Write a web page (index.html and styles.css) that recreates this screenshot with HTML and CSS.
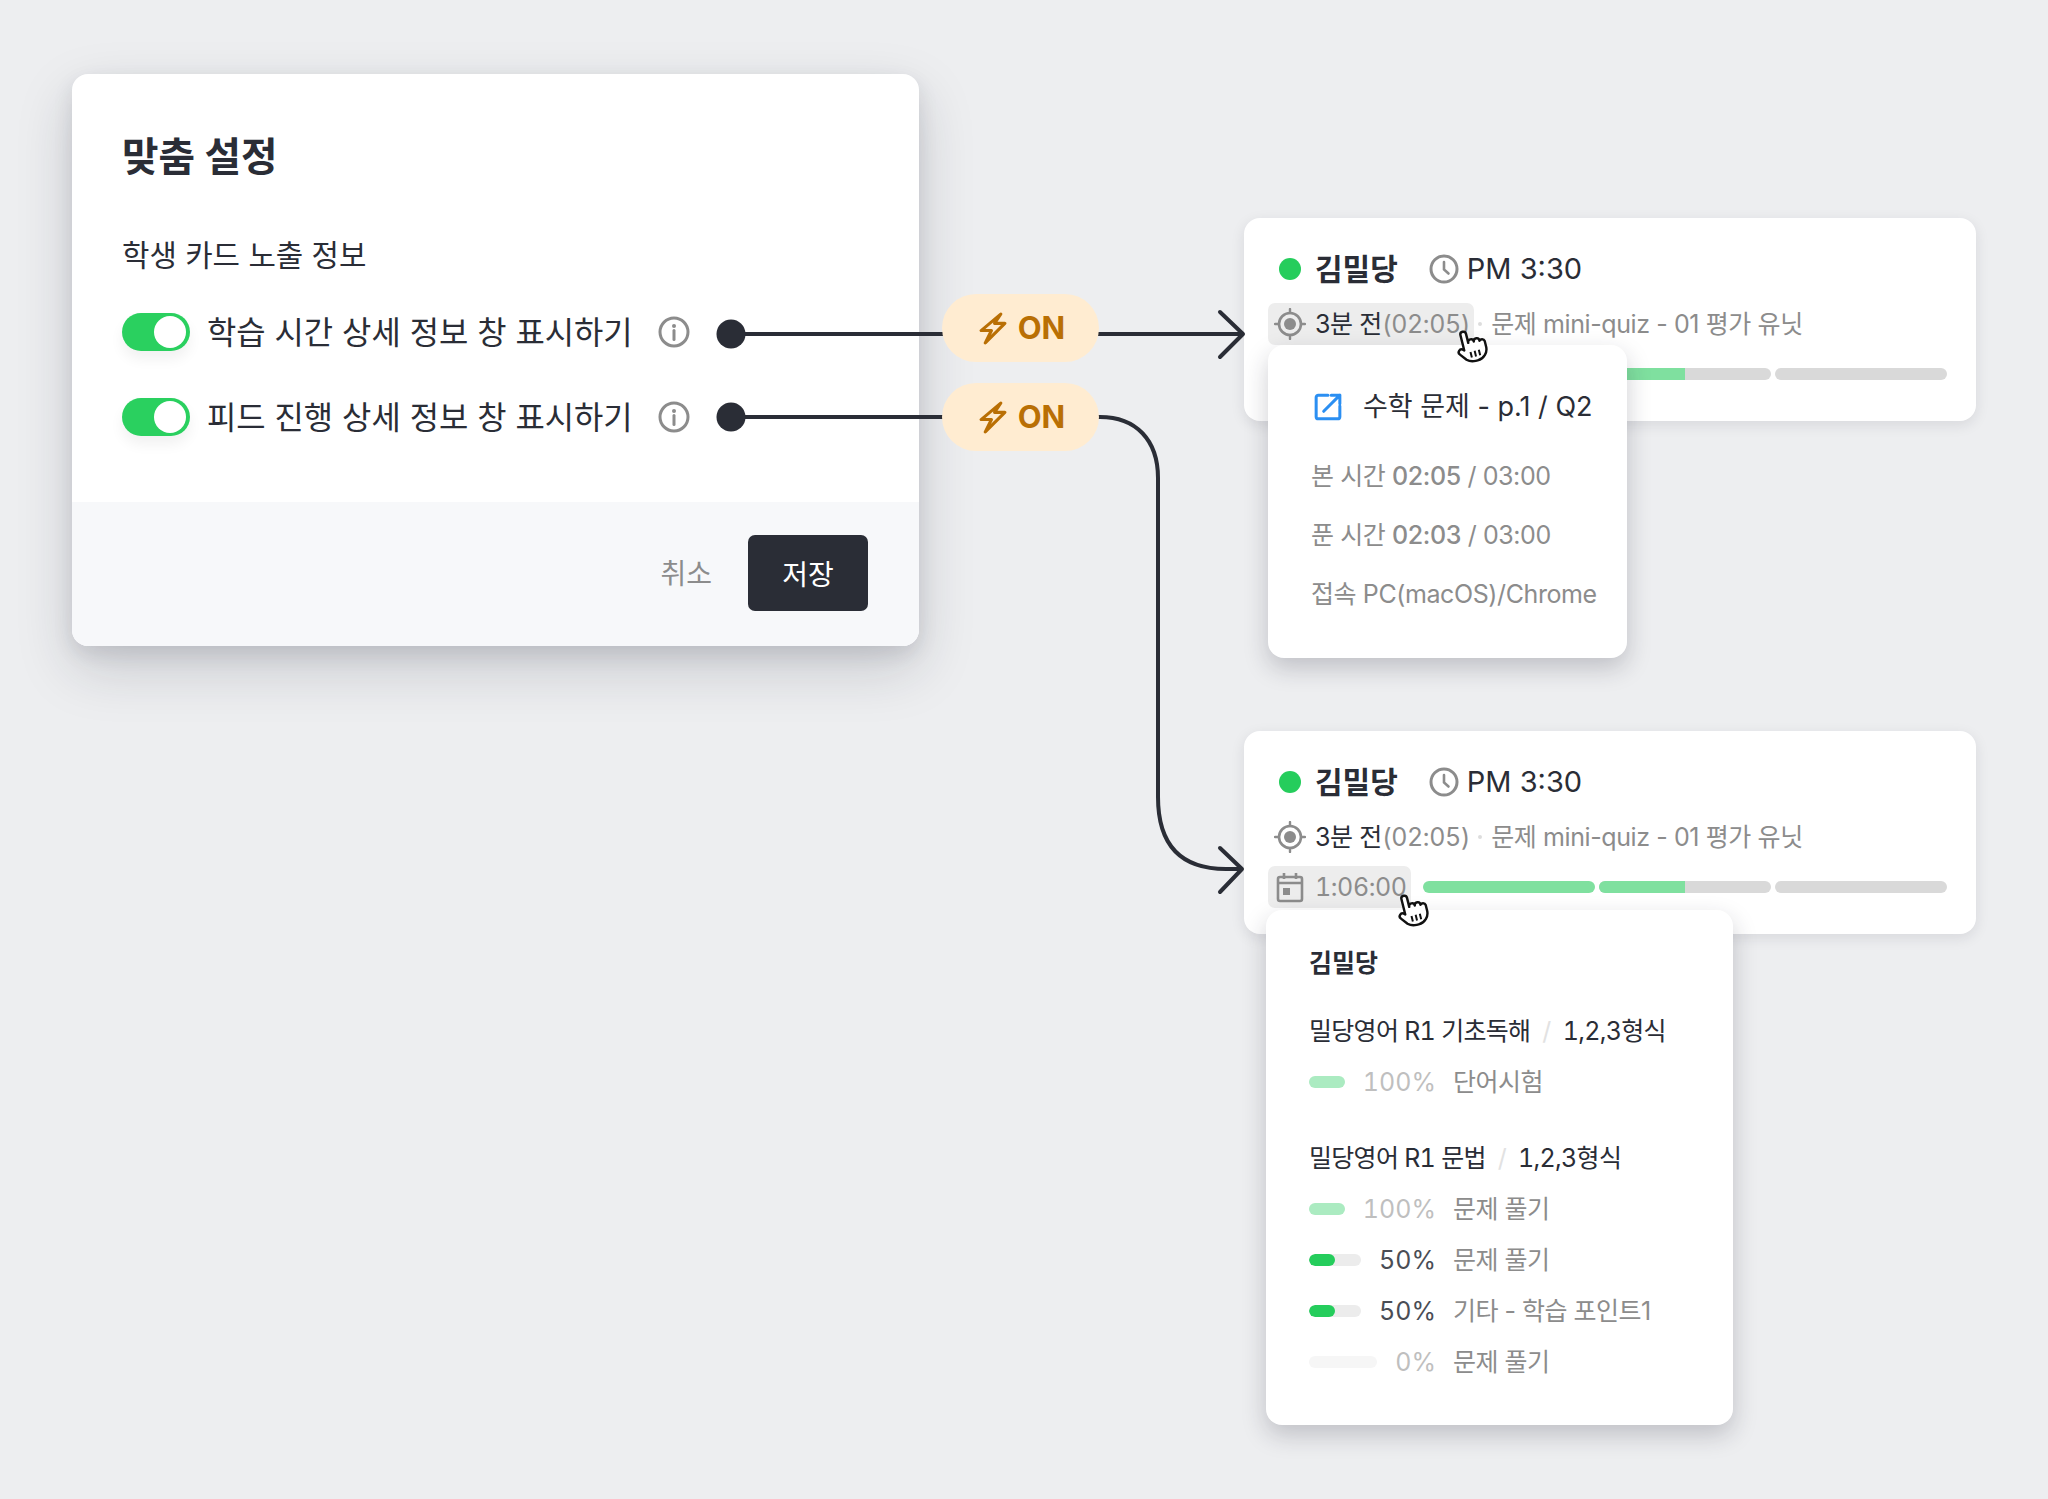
FILE: index.html
```html
<!DOCTYPE html>
<html lang="ko">
<head>
    <meta charset="UTF-8">
    <meta name="viewport" content="width=device-width, initial-scale=1.0">
    <title>맞춤 설정</title>
    <link rel="stylesheet" href="styles.css">
</head>
<body>

<div class="canvas">

    <!-- 맞춤 설정 모달 -->
    <section class="modal">
        <div class="modal-body">
            <h1 class="modal-title">맞춤 설정</h1>
            <p class="modal-sub">학생 카드 노출 정보</p>
            <div class="option-row">
                <span class="toggle"></span>
                <span class="option-label">학습 시간 상세 정보 창 표시하기</span>
                <svg class="info-icon" viewBox="0 0 32 32"><circle cx="16" cy="16" r="14" fill="none" stroke="#8c8c8c" stroke-width="3"/><circle cx="16" cy="10" r="2" fill="#8c8c8c"/><path d="M16 14.500v9" stroke="#8c8c8c" stroke-width="3" stroke-linecap="round"/></svg>
            </div>
            <div class="option-row">
                <span class="toggle"></span>
                <span class="option-label">피드 진행 상세 정보 창 표시하기</span>
                <svg class="info-icon" viewBox="0 0 32 32"><circle cx="16" cy="16" r="14" fill="none" stroke="#8c8c8c" stroke-width="3"/><circle cx="16" cy="10" r="2" fill="#8c8c8c"/><path d="M16 14.500v9" stroke="#8c8c8c" stroke-width="3" stroke-linecap="round"/></svg>
            </div>
        </div>
        <div class="modal-footer">
            <span class="cancel">취소</span>
            <button class="save">저장</button>
        </div>
    </section>

    <!-- 학생 카드 1 -->
    <article class="card card-one">
        <div class="card-head">
            <span class="status"></span>
            <strong class="name">김밀당</strong>
            <svg class="clock" viewBox="0 0 30 30"><circle cx="15" cy="15" r="13" fill="none" stroke="#8c8c8c" stroke-width="3"/><path d="M15 8v7.500l4.500 4" fill="none" stroke="#8c8c8c" stroke-width="2.600" stroke-linecap="round"/></svg>
            <span class="time">PM 3:30</span>
        </div>
        <div class="card-row">
            <span class="chip">
                <svg class="chip-icon" viewBox="0 0 32 32"><circle cx="16" cy="16" r="11" fill="none" stroke="#8c8c8c" stroke-width="2.600"/><circle cx="16" cy="16" r="6" fill="#8c8c8c"/><path d="M16 1v4M16 27v4M1 16h4M27 16h4" stroke="#8c8c8c" stroke-width="2.400" stroke-linecap="round"/></svg>
                <span class="ago">3분 전</span><span class="muted clock-num">(02:05)</span>
            </span>
            <span class="sep"></span>
            <span class="muted">문제 mini-quiz - 01 평가 유닛</span>
        </div>
        <div class="card-row">
            <span class="chip chip-plain">
                <svg class="chip-icon" viewBox="0 0 32 32"><path d="M6 6h20a2 2 0 0 1 2 2v20a2 2 0 0 1-2 2H6a2 2 0 0 1-2-2V8a2 2 0 0 1 2-2zM4 12h24M10 2v6M22 2v6" fill="none" stroke="#8c8c8c" stroke-width="2.600"/><rect x="9" y="17" width="7" height="7" fill="#8c8c8c"/></svg>
                <span class="muted clock-num">1:06:00</span>
            </span>
            <div class="bars">
                <span class="bar bar-done"></span>
                <span class="bar"><i class="bar-fill"></i></span>
                <span class="bar"></span>
            </div>
        </div>

        <div class="popup popup-quiz">
            <div class="quiz-title">
                <svg class="ext-icon" viewBox="0 0 26 26"><path d="M13 2H4a2 2 0 0 0-2 2v18a2 2 0 0 0 2 2h18a2 2 0 0 0 2-2v-10M16 2h8v8M24 2 9 17" fill="none" stroke="#2b8ff2" stroke-width="2.800" stroke-linecap="round" stroke-linejoin="round"/></svg>
                <span>수학 문제 - p.1 / Q2</span>
            </div>
            <p class="quiz-line">본 시간 <b>02:05</b> / 03:00</p>
            <p class="quiz-line">푼 시간 <b>02:03</b> / 03:00</p>
            <p class="quiz-line">접속 PC(macOS)/Chrome</p>
        </div>

        <svg class="hand hand-one" viewBox="0 0 24 28"><g transform="rotate(-14 12 14)"><path d="M7 16V5a2 2 0 0 1 4 0v6.500a2 2 0 0 1 4 0 2 2 0 0 1 4 .5 2 2 0 0 1 3.500 1v4a8 8 0 0 1-8 8h-1.500c-2.800 0-4.500-.86-6-2.340l-3.600-4.600a2 2 0 0 1 2.830-2.820z" fill="#fff" stroke="#111" stroke-width="1.700" stroke-linejoin="round"/><path d="M11 18v4M14 18v4M17 18v4" stroke="#111" stroke-width="1.400"/></g></svg>
    </article>

    <!-- 학생 카드 2 -->
    <article class="card card-two">
        <div class="card-head">
            <span class="status"></span>
            <strong class="name">김밀당</strong>
            <svg class="clock" viewBox="0 0 30 30"><circle cx="15" cy="15" r="13" fill="none" stroke="#8c8c8c" stroke-width="3"/><path d="M15 8v7.500l4.500 4" fill="none" stroke="#8c8c8c" stroke-width="2.600" stroke-linecap="round"/></svg>
            <span class="time">PM 3:30</span>
        </div>
        <div class="card-row">
            <span class="chip chip-plain">
                <svg class="chip-icon" viewBox="0 0 32 32"><circle cx="16" cy="16" r="11" fill="none" stroke="#8c8c8c" stroke-width="2.600"/><circle cx="16" cy="16" r="6" fill="#8c8c8c"/><path d="M16 1v4M16 27v4M1 16h4M27 16h4" stroke="#8c8c8c" stroke-width="2.400" stroke-linecap="round"/></svg>
                <span class="ago">3분 전</span><span class="muted clock-num">(02:05)</span>
            </span>
            <span class="sep"></span>
            <span class="muted">문제 mini-quiz - 01 평가 유닛</span>
        </div>
        <div class="card-row">
            <span class="chip">
                <svg class="chip-icon" viewBox="0 0 32 32"><path d="M6 6h20a2 2 0 0 1 2 2v20a2 2 0 0 1-2 2H6a2 2 0 0 1-2-2V8a2 2 0 0 1 2-2zM4 12h24M10 2v6M22 2v6" fill="none" stroke="#8c8c8c" stroke-width="2.600"/><rect x="9" y="17" width="7" height="7" fill="#8c8c8c"/></svg>
                <span class="muted clock-num">1:06:00</span>
            </span>
            <div class="bars">
                <span class="bar bar-done"></span>
                <span class="bar"><i class="bar-fill"></i></span>
                <span class="bar"></span>
            </div>
        </div>

        <div class="popup popup-detail">
            <h3 class="detail-name">김밀당</h3>

            <div class="detail-head">밀당영어 R1 기초독해<span class="slash">/</span>1,2,3형식</div>
            <div class="detail-row row-faded">
                <div class="progress"><span class="mini"><i class="mini-fill"></i></span><span class="pct">100%</span></div>
                <span class="detail-label">단어시험</span>
            </div>

            <div class="detail-head head-gap">밀당영어 R1 문법<span class="slash">/</span>1,2,3형식</div>
            <div class="detail-row row-faded">
                <div class="progress"><span class="mini"><i class="mini-fill"></i></span><span class="pct">100%</span></div>
                <span class="detail-label">문제 풀기</span>
            </div>
            <div class="detail-row">
                <div class="progress"><span class="mini"><i class="mini-fill half"></i></span><span class="pct">50%</span></div>
                <span class="detail-label">문제 풀기</span>
            </div>
            <div class="detail-row">
                <div class="progress"><span class="mini"><i class="mini-fill half"></i></span><span class="pct">50%</span></div>
                <span class="detail-label">기타 - 학습 포인트1</span>
            </div>
            <div class="detail-row row-empty">
                <div class="progress"><span class="mini"></span><span class="pct">0%</span></div>
                <span class="detail-label">문제 풀기</span>
            </div>
        </div>

        <svg class="hand hand-two" viewBox="0 0 24 28"><g transform="rotate(-14 12 14)"><path d="M7 16V5a2 2 0 0 1 4 0v6.500a2 2 0 0 1 4 0 2 2 0 0 1 4 .5 2 2 0 0 1 3.500 1v4a8 8 0 0 1-8 8h-1.500c-2.800 0-4.500-.86-6-2.340l-3.600-4.600a2 2 0 0 1 2.830-2.820z" fill="#fff" stroke="#111" stroke-width="1.700" stroke-linejoin="round"/><path d="M11 18v4M14 18v4M17 18v4" stroke="#111" stroke-width="1.400"/></g></svg>
    </article>

    <!-- 연결선 -->
    <svg class="wires" viewBox="0 0 2048 1499">
        <g fill="none" stroke="#2a2d36" stroke-width="4" stroke-linecap="round" stroke-linejoin="round">
            <path d="M731 334H1242"/>
            <path d="M1220 312 1243 334 1220 357"/>
            <path d="M731 417H1100C1136 417 1158 440 1158 478V797C1158 844 1180 869 1226 869H1241"/>
            <path d="M1220 848 1242 869 1220 892"/>
        </g>
        <circle cx="731" cy="334" r="14.500" fill="#2a2d36"/>
        <circle cx="731" cy="417" r="14.500" fill="#2a2d36"/>
    </svg>

    <div class="pill pill-one">
        <svg class="bolt" viewBox="0 0 27 32"><path d="M21 2 2 18h10L6 30l19-19H15z" fill="none" stroke="#b96f04" stroke-width="3" stroke-linejoin="round"/></svg>
        <span>ON</span>
    </div>
    <div class="pill pill-two">
        <svg class="bolt" viewBox="0 0 27 32"><path d="M21 2 2 18h10L6 30l19-19H15z" fill="none" stroke="#b96f04" stroke-width="3" stroke-linejoin="round"/></svg>
        <span>ON</span>
    </div>

</div>

</body>
</html>
```

FILE: styles.css
```css
* {
    box-sizing: border-box;
}

body {
    margin: 0;
    background: #edeef0;
    font-family: Inter, "Noto Sans CJK KR", sans-serif;
    line-height: 36px;
    color: #2a2d36;
}

.canvas {
    position: relative;
    width: 2048px;
    height: 1499px;
    overflow: hidden;
}

/* 모달 */
.modal {
    position: absolute;
    left: 72px;
    top: 74px;
    width: 847px;
    height: 572px;
    display: flex;
    flex-direction: column;
    background: #fff;
    border-radius: 16px;
    overflow: hidden;
    box-shadow: 0 22px 56px rgba(30, 34, 50, 0.18), 0 8px 20px rgba(30, 34, 50, 0.1);
}

.modal-body {
    flex: 1;
    padding: 59px 50px 0;
}

.modal-title {
    margin: 0;
    font-size: 39.700px;
    line-height: 48px;
    font-weight: 700;
}

.modal-sub {
    margin: 54px 0 38px;
    font-size: 29.800px;
    line-height: 40px;
}

.option-row {
    display: flex;
    align-items: center;
    height: 38px;
    margin-bottom: 47px;
}

.toggle {
    position: relative;
    width: 68px;
    height: 38px;
    margin-right: 17px;
    border-radius: 19px;
    background: #2ad05f;
    box-shadow: 0 8px 14px rgba(0, 0, 0, 0.06);
}

.toggle::after {
    content: "";
    position: absolute;
    right: 4px;
    top: 3px;
    width: 32px;
    height: 32px;
    border-radius: 50%;
    background: #fff;
}

.option-label {
    width: 422px;
    padding-top: 2px;
    font-size: 31.850px;
    white-space: nowrap;
}

.info-icon {
    width: 32px;
    height: 32px;
    margin-left: 29px;
}

.modal-footer {
    height: 144px;
    display: flex;
    align-items: flex-start;
    justify-content: flex-end;
    gap: 36px;
    padding: 33px 51px 0 0;
    background: #f7f8fa;
}

.cancel {
    font-size: 28px;
    line-height: 78px;
    color: #8c8c8c;
}

.save {
    width: 120px;
    height: 76px;
    padding: 0;
    border: none;
    border-radius: 7px;
    background: #2a2d36;
    color: #fff;
    font-family: inherit;
    font-size: 28px;
}

/* 카드 */
.card {
    position: absolute;
    left: 1244px;
    width: 732px;
    height: 203px;
    padding: 31px 29px 0 24px;
    background: #fff;
    border-radius: 16px;
    box-shadow: 0 4px 14px rgba(30, 34, 50, 0.1);
}

.card-one {
    top: 218px;
}

.card-two {
    top: 731px;
}

.card-head {
    display: flex;
    align-items: center;
    height: 40px;
    margin-bottom: 14px;
    padding-left: 11px;
}

.status {
    width: 22px;
    height: 22px;
    border-radius: 50%;
    background: #25cd5c;
}

.name {
    margin-left: 14px;
    font-size: 30px;
    font-weight: 700;
}

.clock {
    width: 30px;
    height: 30px;
    margin-left: 31px;
}

.time {
    margin-left: 8px;
    font-size: 29px;
}

.card-row {
    display: flex;
    align-items: center;
    height: 42px;
    margin-bottom: 8px;
    font-size: 25px;
    letter-spacing: -0.400px;
    white-space: nowrap;
}

.chip {
    display: flex;
    align-items: center;
    height: 42px;
    padding: 0 4px 0 6px;
    border-radius: 7px;
    background: #ededed;
}

.chip-plain {
    background: none;
}

.chip-icon {
    width: 32px;
    height: 32px;
    margin-right: 9px;
}

.muted {
    color: #8c8c8c;
}

.clock-num {
    font-variant-numeric: tabular-nums;
}

.sep {
    width: 4px;
    height: 4px;
    margin: 0 9px 0 4px;
    border-radius: 50%;
    background: #ddd;
}

.bars {
    flex: 1;
    display: flex;
    gap: 4px;
    margin-left: 12px;
}

.bar {
    flex: 1;
    height: 12px;
    border-radius: 6px;
    background: #d9d9d9;
    overflow: hidden;
}

.bar-done {
    background: #7fe09f;
}

.bar-fill {
    display: block;
    width: 50%;
    height: 100%;
    background: #7fe09f;
}

/* 팝업 */
.popup {
    position: absolute;
    z-index: 2;
    background: #fff;
    border-radius: 16px;
    box-shadow: 0 10px 24px rgba(30, 34, 50, 0.22);
}

.popup-quiz {
    left: 24px;
    top: 127px;
    width: 359px;
    height: 313px;
    padding: 44px 0 0 43px;
}

.quiz-title {
    display: flex;
    align-items: center;
    gap: 21px;
    height: 36px;
    margin: 0 0 33px 3px;
    font-size: 27px;
    white-space: nowrap;
}

.ext-icon {
    width: 28px;
    height: 28px;
}

.quiz-line {
    height: 36px;
    margin: 0 0 23px;
    font-size: 25px;
    letter-spacing: -0.400px;
    color: #8c8c8c;
    white-space: nowrap;
}

.quiz-line b {
    font-weight: 500;
}

.popup-detail {
    left: 22px;
    top: 179px;
    width: 467px;
    height: 515px;
    padding: 35px 0 0 43px;
    font-size: 25px;
}

.detail-name {
    margin: 0 0 33px;
    font-size: 25px;
    font-weight: 700;
}

.detail-head {
    height: 34px;
    margin-bottom: 17px;
    line-height: 34px;
    letter-spacing: -0.700px;
    font-variant-numeric: tabular-nums;
    white-space: nowrap;
}

.head-gap {
    margin-top: 42px;
}

.slash {
    margin: 0 12px;
    color: #e2e2e2;
}

.detail-row {
    display: flex;
    align-items: center;
    gap: 17px;
    height: 34px;
    margin-bottom: 17px;
    white-space: nowrap;
}

.progress {
    width: 127px;
    display: flex;
    align-items: center;
    gap: 18px;
}

.mini {
    flex: 1;
    height: 12px;
    border-radius: 6px;
    background: #ececec;
    overflow: hidden;
}

.mini-fill {
    display: block;
    width: 100%;
    height: 100%;
    background: #25cd5c;
}

.mini-fill.half {
    width: 50%;
    border-radius: 6px;
}

.pct {
    color: #4a4d55;
    font-variant-numeric: tabular-nums;
}

.row-faded .mini-fill {
    background: #abebc1;
}

.row-faded .pct,
.row-empty .pct {
    color: #bfbfbf;
}

.row-empty .mini {
    background: #f6f6f6;
}

.detail-label {
    letter-spacing: -0.500px;
    color: #8c8c8c;
}

/* 커서 */
.hand {
    position: absolute;
    z-index: 3;
    width: 35px;
    height: 40px;
}

.hand-one {
    left: 209px;
    top: 108px;
}

.hand-two {
    left: 150px;
    top: 159px;
}

/* 연결선 */
.wires {
    position: absolute;
    left: 0;
    top: 0;
    width: 2048px;
    height: 1499px;
}

.pill {
    position: absolute;
    left: 942px;
    width: 157px;
    height: 68px;
    display: flex;
    align-items: center;
    justify-content: center;
    gap: 11px;
    padding-left: 3px;
    border-radius: 34px;
    background: #ffecd1;
    color: #b96f04;
    font-size: 31px;
    line-height: 66px;
    font-weight: 700;
}

.pill-one {
    top: 294px;
}

.pill-two {
    top: 383px;
}

.bolt {
    width: 28px;
    height: 33px;
}
```
